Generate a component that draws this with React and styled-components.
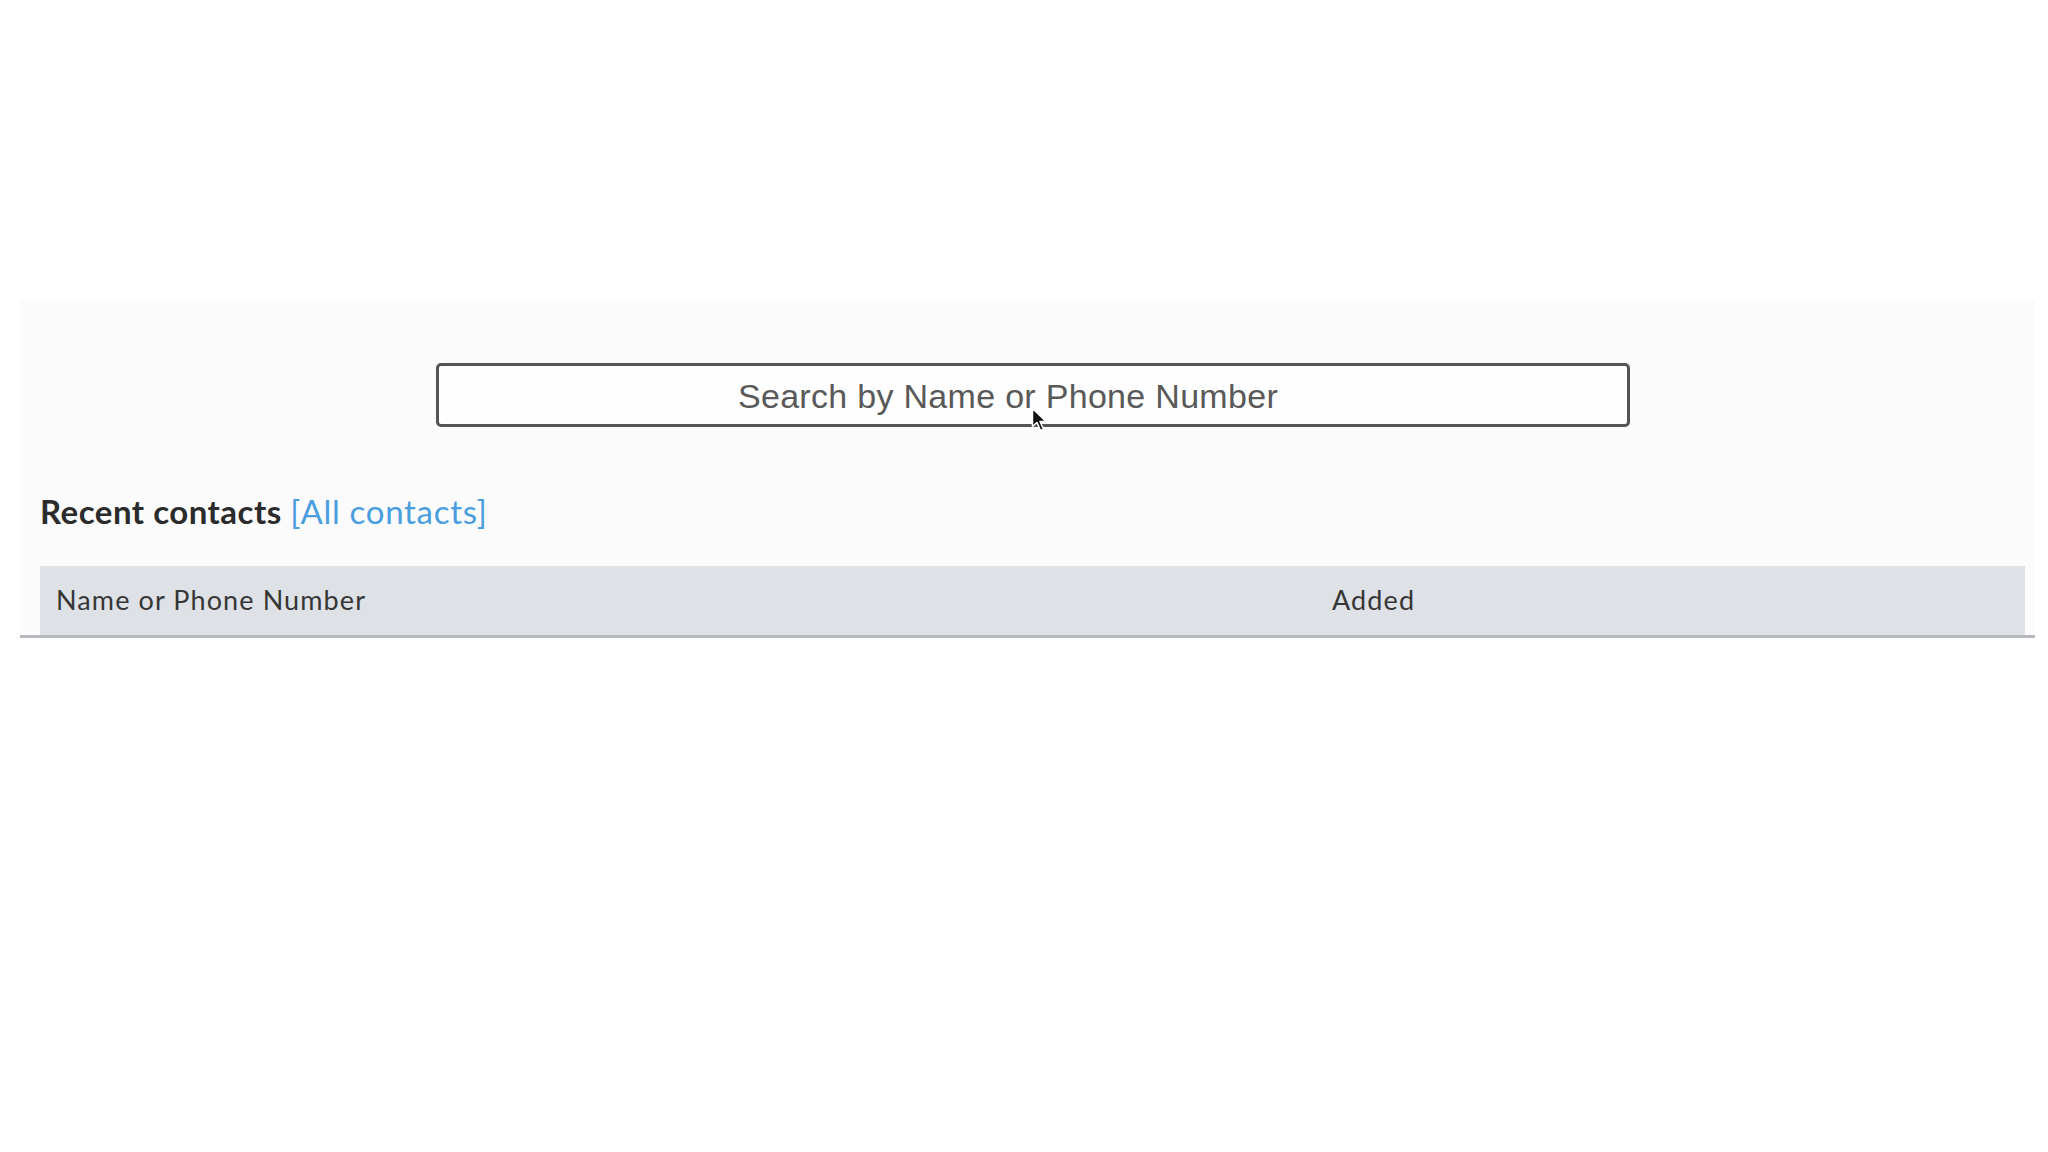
import React from "react";
import styled, { createGlobalStyle } from "styled-components";

const GlobalStyle = createGlobalStyle`
  html, body {
    margin: 0;
    padding: 0;
    background: #ffffff;
  }
  body {
    font-family: Lato, "Open Sans", sans-serif;
    color: #333;
  }
`;

const Page = styled.div`
  width: 2048px;
  height: 1152px;
  padding-top: 300px;
  box-sizing: border-box;
`;

const Panel = styled.section`
  margin: 0 13px 0 20px;
  background: #fbfbfb;
  border-bottom: 3px solid #b5b8bc;
`;

const SearchRow = styled.div`
  padding: 63px 0 0 416px;
`;

const SearchBox = styled.div`
  position: relative;
  width: 1194px;
  height: 64px;
  box-sizing: border-box;
`;

const SearchInput = styled.input`
  width: 100%;
  height: 100%;
  box-sizing: border-box;
  border: 3px solid #555;
  border-radius: 5px;
  background: #fefefe;
  text-align: center;
  font-family: "Liberation Sans", Arial, sans-serif;
  font-size: 34px;
  letter-spacing: 0.3px;
  color: #333;
  outline: none;
  padding: 3px 50px 0 0;

  &::placeholder {
    color: #595959;
  }
`;

const Cursor = styled.svg`
  position: absolute;
  left: 595px;
  top: 44px;
  pointer-events: none;
`;

const Heading = styled.h2`
  margin: 65px 0 0 20px;
  font-size: 33px;
  line-height: 1.2;
  font-weight: 700;
  letter-spacing: 0.5px;
  color: #2b2b2b;
`;

const AllLink = styled.a`
  font-weight: 400;
  letter-spacing: 0.7px;
  color: #4a9ee0;
  text-decoration: none;
  cursor: pointer;
`;

const Table = styled.div`
  margin: 34px 10px 0 20px;
`;

const HeadRow = styled.div`
  display: grid;
  grid-template-columns: 1276px 1fr;
  align-items: center;
  height: 69px;
  background: #dee2e7;
`;

const HeadCell = styled.div`
  padding-left: 16px;
  font-size: 27px;
  line-height: 1.2;
  letter-spacing: 1.1px;
  color: #363636;
`;

export default function App() {
  return (
    <Page>
      <GlobalStyle />
      <Panel>
        <SearchRow>
          <SearchBox>
            <SearchInput placeholder="Search by Name or Phone Number" />
            <Cursor width="18" height="26" viewBox="0 0 18 26">
              <path
                d="M1.5 1.5 L1.5 19.5 L6 15.5 L9.5 23.5 L12.5 22.2 L9 14.5 L15 14.5 Z"
                fill="#111"
                stroke="#fff"
                strokeWidth="1.5"
                strokeLinejoin="round"
              />
            </Cursor>
          </SearchBox>
        </SearchRow>
        <Heading>
          Recent contacts <AllLink>[All contacts]</AllLink>
        </Heading>
        <Table>
          <HeadRow>
            <HeadCell>Name or Phone Number</HeadCell>
            <HeadCell>Added</HeadCell>
          </HeadRow>
        </Table>
      </Panel>
    </Page>
  );
}
